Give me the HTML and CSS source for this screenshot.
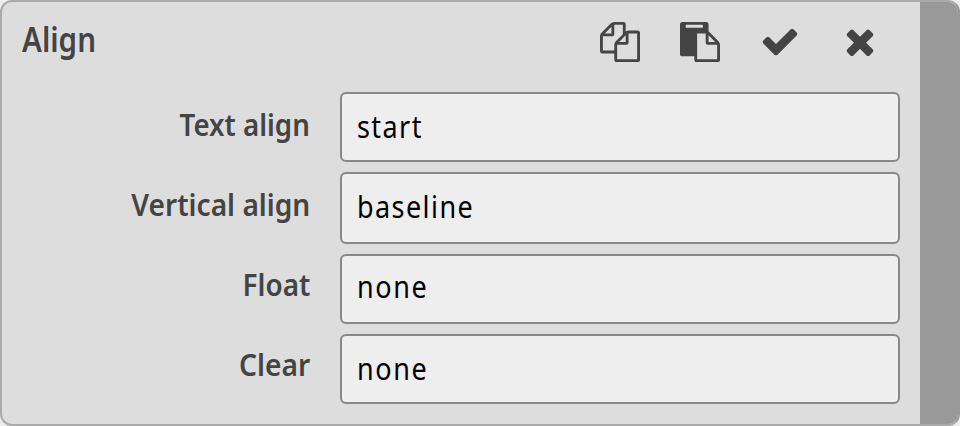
FILE: index.html
```
<!DOCTYPE html>
<html lang="en">
<head>
<meta charset="utf-8">
<title>Align</title>
<link rel="stylesheet" href="styles.css">
</head>
<body>
<section class="panel">
  <div class="content">
    <header class="header">
      <h1 class="title"><span class="text">Align</span></h1>
      <div class="actions">
        <svg class="icon" viewBox="0 0 1792 1792"><path d="M1696 384q40 0 68 28t28 68v1216q0 40-28 68t-68 28h-960q-40 0-68-28t-28-68v-288h-544q-40 0-68-28t-28-68v-672q0-40 20-88t48-76l408-408q28-28 76-48t88-20h416q40 0 68 28t28 68v328q68-40 128-40h416zm-544 213l-299 299h299v-299zm-640-384l-299 299h299v-299zm196 647l316-316v-416h-384v416q0 40-28 68t-68 28h-416v640h512v-256q0-40 20-88t48-76zm956 804v-1152h-384v416q0 40-28 68t-68 28h-416v640h896z"/></svg>
        <svg class="icon" viewBox="0 0 1792 1792"><path d="M768 1664h896v-640h-416q-40 0-68-28t-28-68v-416h-384v1152zm256-1440v-64q0-13-9.5-22.5t-22.5-9.5h-704q-13 0-22.5 9.5t-9.5 22.5v64q0 13 9.5 22.5t22.5 9.5h704q13 0 22.5-9.5t9.5-22.5zm256 672h299l-299-299v299zm512 128v672q0 40-28 68t-68 28h-960q-40 0-68-28t-28-68v-160h-544q-40 0-68-28t-28-68v-1344q0-40 28-68t68-28h1088q40 0 68 28t28 68v328q21 13 36 28l408 408q28 28 48 76t20 88z"/></svg>
        <svg class="icon" viewBox="0 30 1792 1792"><path d="M1671 566q0 40-28 68l-724 724-136 136q-28 28-68 28t-68-28l-136-136-362-362q-28-28-28-68t28-68l136-136q28-28 68-28t68 28l294 295 656-657q28-28 68-28t68 28l136 136q28 28 28 68z"/></svg>
        <svg class="icon" viewBox="0 30 1792 1792"><path d="M1490 1322q0 40-28 68l-136 136q-28 28-68 28t-68-28l-294-294-294 294q-28 28-68 28t-68-28l-136-136q-28-28-28-68t28-68l294-294-294-294q-28-28-28-68t28-68l136-136q28-28 68-28t68 28l294 294 294-294q28-28 68-28t68 28l136 136q28 28 28 68t-28 68l-294 294 294 294q28 28 28 68z"/></svg>
      </div>
    </header>
    <div class="row">
      <div class="label"><span class="text text-align">Text align</span></div>
      <div class="field"><span class="text start">start</span></div>
    </div>
    <div class="row row-tall">
      <div class="label"><span class="text vertical">Vertical align</span></div>
      <div class="field"><span class="text baseline">baseline</span></div>
    </div>
    <div class="row">
      <div class="label"><span class="text float">Float</span></div>
      <div class="field"><span class="text none">none</span></div>
    </div>
    <div class="row row-last">
      <div class="label"><span class="text clear">Clear</span></div>
      <div class="field"><span class="text none">none</span></div>
    </div>
  </div>
  <div class="scrollbar"></div>
</section>
</body>
</html>
```
FILE: styles.css
```
* { box-sizing: border-box; }
body {
  margin: 0;
  background: #eee;
  font-family: "Noto Sans", "Open Sans", sans-serif;
  font-size: 31px;
  line-height: 42px;
}
.panel {
  display: flex;
  width: 960px;
  height: 426px;
  border: 2px solid #aaa;
  border-right-color: #999;
  border-radius: 12px;
  background: #ddd;
  overflow: hidden;
}
.content { width: 918px; }
.scrollbar { flex: 1; background: #999; }
.header {
  display: flex;
  justify-content: space-between;
  height: 90px;
  padding: 16px 40px 0 20px;
  color: #444;
}
.title { margin: 0; font-size: 34px; font-weight: 600; }
.actions { display: flex; gap: 40px; padding-top: 4px; }
.icon { width: 40px; height: 40px; fill: #444; }
.row { display: flex; height: 70px; margin-bottom: 10px; }
.row-tall { height: 72px; }
.label {
  width: 308px;
  padding-top: 11px;
  text-align: right;
  font-weight: 600;
  color: #444;
}
.row-tall + .row .label, .row-last .label { padding-top: 9px; }
.field {
  width: 560px;
  margin-left: 30px;
  padding: 11px 15px;
  border: 2px solid #888;
  border-radius: 6px;
  background: #eee;
  color: #000;
}
.row-tall + .row .field { padding-top: 9px; }
.row-last .field { padding-top: 11px; }
.text {
  display: inline-block;
  white-space: nowrap;
  transform: scaleX(.87);
}
.title .text, .field .text { transform-origin: left; }
.label .text { transform-origin: right; }
.field .text { letter-spacing: 1.65px; }
.field .none { letter-spacing: 1.9px; }
.text-align { transform: scaleX(.893); }
.vertical { transform: scaleX(.907); }
.float { transform: scaleX(.9); }
.clear { transform: scaleX(.91); }
```
